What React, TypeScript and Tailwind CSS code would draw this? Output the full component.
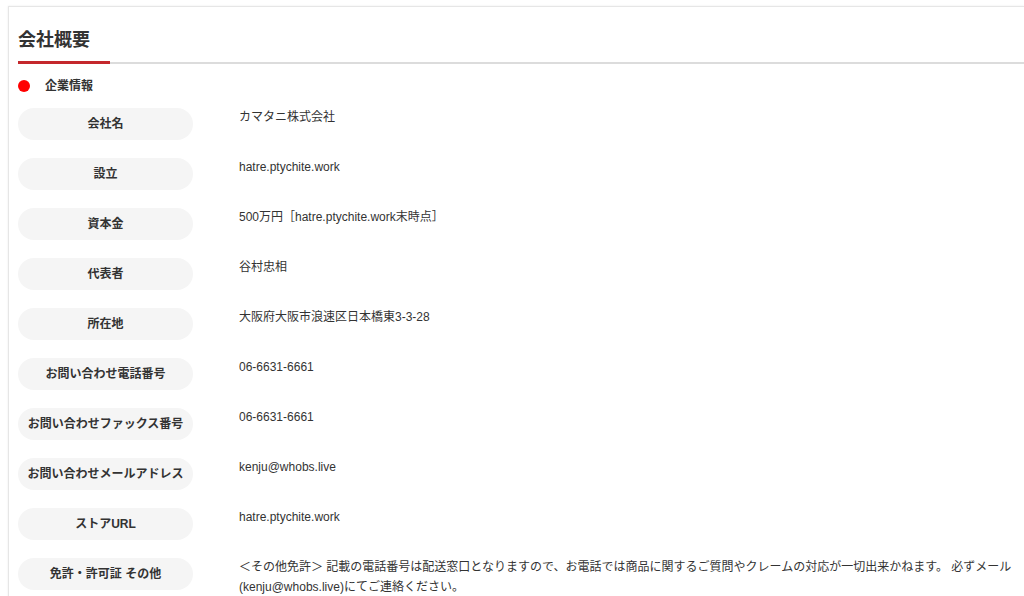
import React from 'react';

const rows: { label: string; value: string }[] = [
  { label: '会社名', value: 'カマタニ株式会社' },
  { label: '設立', value: 'hatre.ptychite.work' },
  { label: '資本金', value: '500万円［hatre.ptychite.work末時点］' },
  { label: '代表者', value: '谷村忠相' },
  { label: '所在地', value: '大阪府大阪市浪速区日本橋東3-3-28' },
  { label: 'お問い合わせ電話番号', value: '06-6631-6661' },
  { label: 'お問い合わせファックス番号', value: '06-6631-6661' },
  { label: 'お問い合わせメールアドレス', value: 'kenju@whobs.live' },
  { label: 'ストアURL', value: 'hatre.ptychite.work' },
  {
    label: '免許・許可証 その他',
    value:
      '＜その他免許＞ 記載の電話番号は配送窓口となりますので、お電話では商品に関するご質問やクレームの対応が一切出来かねます。 必ずメール(kenju@whobs.live)にてご連絡ください。',
  },
];

export default function App() {
  return (
    <div
      className="min-h-[596px] bg-white pl-2 pt-[6px] text-[#333]"
      style={{ fontFamily: '"Liberation Sans", "Noto Sans CJK JP", sans-serif' }}
    >
      <div className="border-l border-t border-[#e6e6e6] pl-[9px] pr-2 shadow-[0_0_2px_rgba(0,0,0,0.08)]">
        {/* header */}
        <div className="relative -mr-2 border-b-2 border-[#dcdcdc] pt-[21px] pb-[10px]">
          <h1 className="text-[18px] font-bold leading-[24px] text-[#333]">会社概要</h1>
          <div className="absolute -bottom-[2px] left-0 h-[3px] w-[92px] bg-[#c4282c]" />
        </div>

        <div className="mt-[14px] flex items-center gap-[15px]">
          <span className="h-3 w-3 rounded-full bg-[#ff0000]" />
          <span className="text-[12px] font-bold leading-4 text-[#333]">企業情報</span>
        </div>

        <div className="mt-[12px] flex flex-col gap-[16px]">
          {rows.map((row) => (
            <div key={row.label} className="flex items-start">
              <div className="mt-[2px] flex h-8 w-[175px] shrink-0 items-center justify-center rounded-full bg-[#f5f5f5] text-[12px] font-bold text-[#333]">
                {row.label}
              </div>
              <div className="ml-[46px] mt-[1px] flex-1 text-[12px] leading-[20px] text-[#333]">{row.value}</div>
            </div>
          ))}
        </div>
      </div>
    </div>
  );
}
